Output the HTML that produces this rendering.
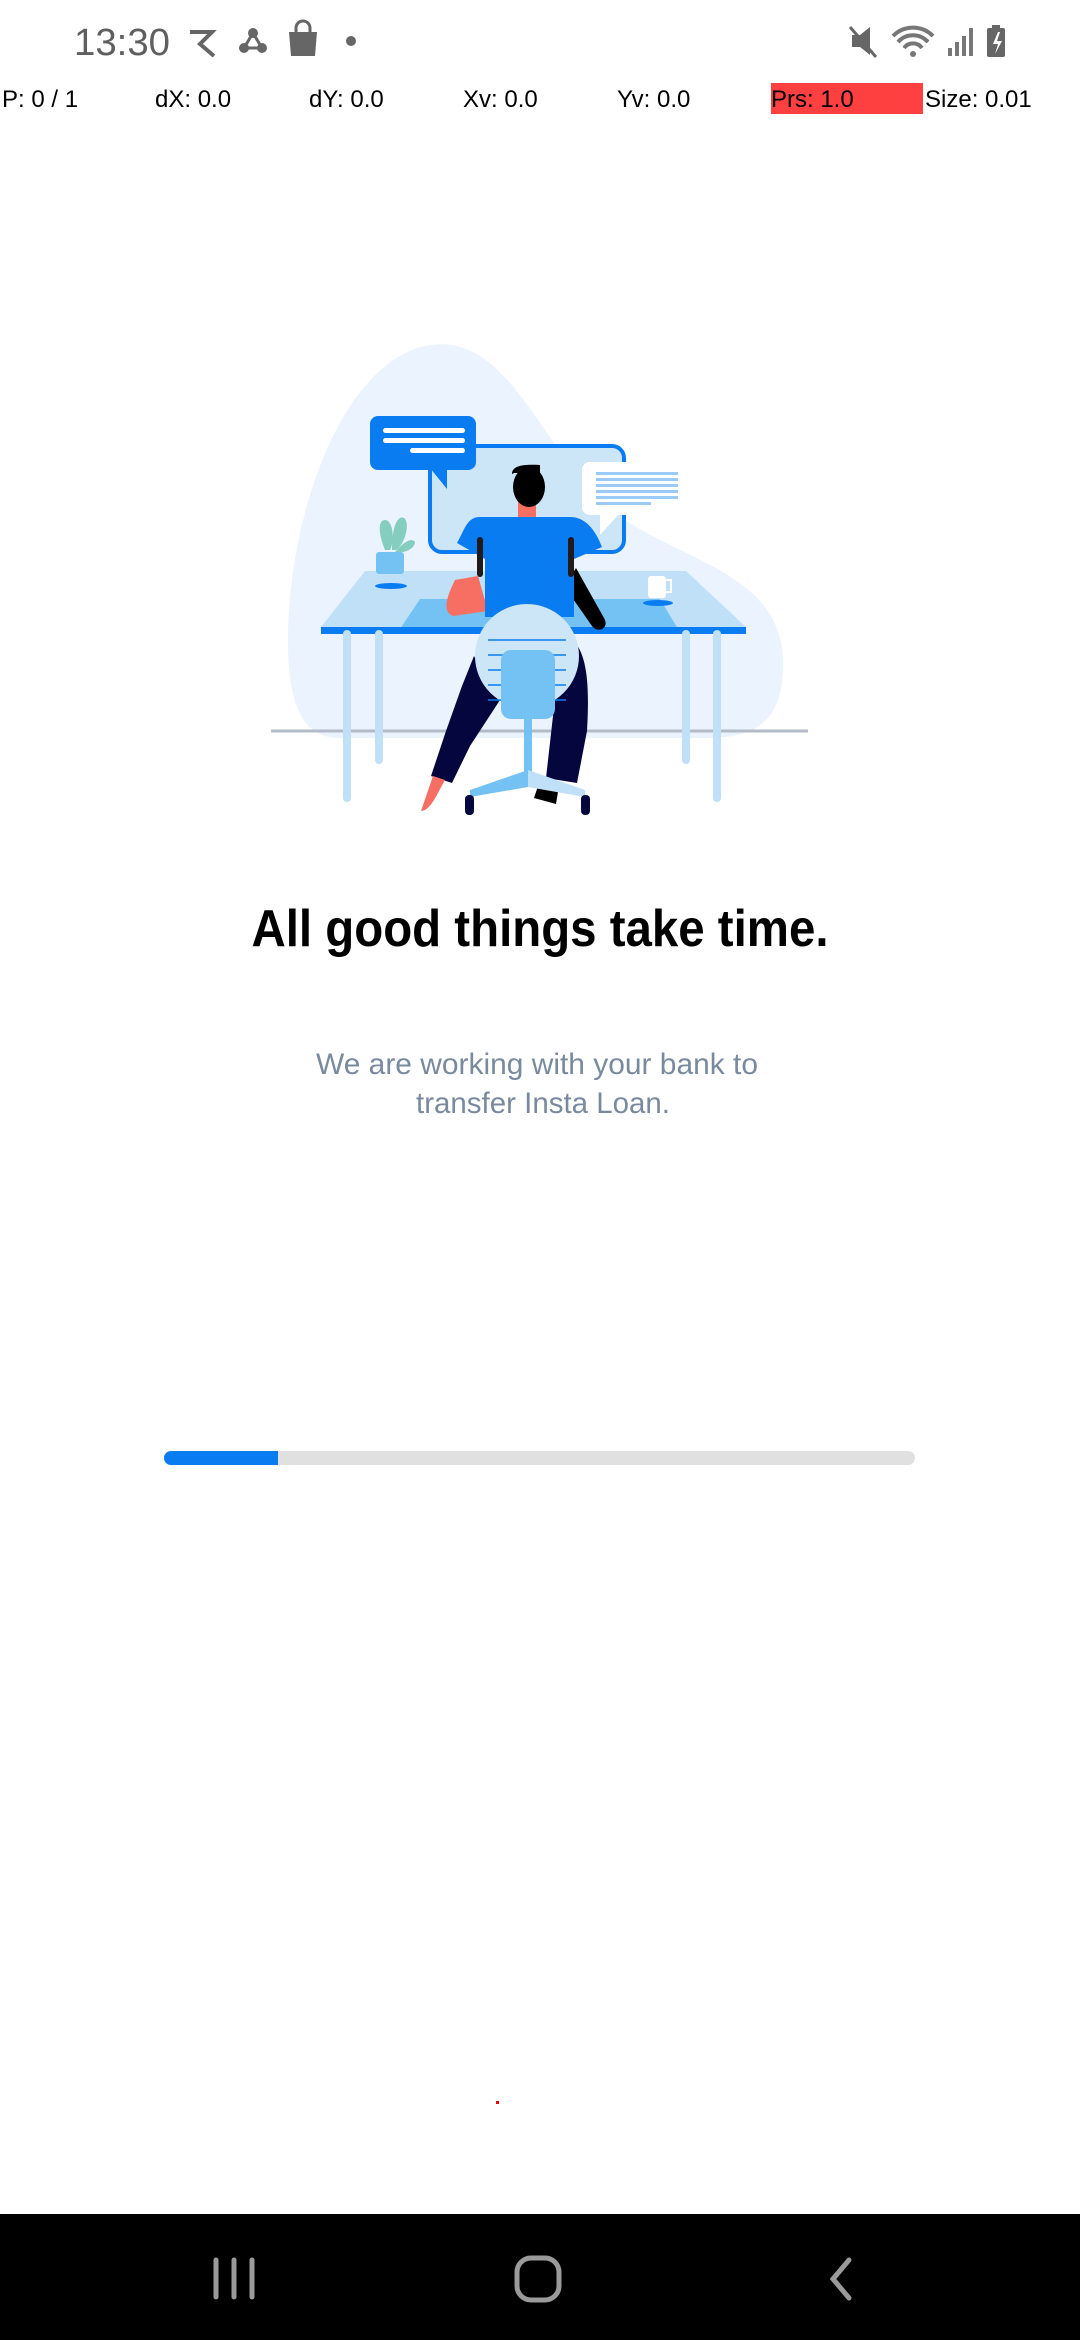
<!DOCTYPE html>
<html><head><meta charset="utf-8"><style>
html,body{margin:0;padding:0;background:#fff;width:1080px;height:2340px;overflow:hidden;font-family:"Liberation Sans",sans-serif}
svg{position:absolute;left:0;top:0}
</style></head><body>
<svg width="1080" height="2340" viewBox="0 0 1080 2340" xmlns="http://www.w3.org/2000/svg">
<!-- status bar -->
<text x="74" y="55" font-size="38" fill="#5f5f5f" font-family="Liberation Sans" textLength="96" lengthAdjust="spacingAndGlyphs">13:30</text>
<path d="M190 32h22l-12 12 14 12" stroke="#666" stroke-width="4" fill="none"/>
<circle cx="253" cy="33" r="5" fill="#666"/><circle cx="244" cy="48" r="5" fill="#666"/><circle cx="262" cy="48" r="5" fill="#666"/><path d="M253 33L244 48h18z" stroke="#666" stroke-width="3" fill="none"/>
<path d="M289 32h28l-2 24h-24z" fill="#666"/><path d="M296 32v-4a7 7 0 0 1 14 0v4" stroke="#666" stroke-width="3" fill="none"/>
<circle cx="351" cy="41" r="5" fill="#666"/>
<path d="M852 35h8l10-8v28l-10-8h-8z" fill="#666"/><path d="M850 27l26 30" stroke="#666" stroke-width="3"/>
<path d="M893 36a28 28 0 0 1 40 0M898 42a20 20 0 0 1 30 0M904 48a11 11 0 0 1 18 0" stroke="#777" stroke-width="4" fill="none"/><circle cx="913" cy="54" r="3" fill="#777"/>
<rect x="948" y="48" width="4" height="8" fill="#777"/><rect x="955" y="42" width="4" height="14" fill="#777"/><rect x="962" y="36" width="4" height="20" fill="#777"/><rect x="969" y="28" width="4" height="28" fill="#777"/>
<rect x="987" y="28" width="18" height="29" rx="2" fill="#666"/><rect x="992" y="25" width="8" height="4" fill="#666"/><path d="M998 32l-5 12h5l-3 10 7-13h-5l3-9z" fill="#fff"/>
<!-- debug row -->
<rect x="771" y="83" width="152" height="31" fill="#ff4040"/>
<g font-size="24" fill="#000" font-family="Liberation Sans">
<text x="2" y="107">P: 0 / 1</text><text x="155" y="107">dX: 0.0</text><text x="309" y="107">dY: 0.0</text><text x="463" y="107">Xv: 0.0</text><text x="617" y="107">Yv: 0.0</text><text x="771" y="107">Prs: 1.0</text><text x="925" y="107">Size: 0.01</text>
</g>
<!-- illustration -->
<path d="M288 640C288 520 340 360 430 345C500 335 530 420 590 490C650 560 780 560 783 660C785 735 740 738 700 738H340C300 738 288 700 288 640Z" fill="#ebf3fe"/>
<line x1="271" y1="731" x2="808" y2="731" stroke="#b3bcc6" stroke-width="3"/>
<rect x="430" y="446" width="194" height="106" rx="12" fill="#cce5f7" stroke="#0a7cf2" stroke-width="4"/>
<rect x="370" y="416" width="106" height="54" rx="8" fill="#0a7cf2"/><path d="M430 468l17 21v-21z" fill="#0a7cf2"/>
<rect x="383" y="428" width="82" height="5" rx="2.5" fill="#fff"/><rect x="383" y="438" width="82" height="5" rx="2.5" fill="#fff"/><rect x="410" y="448" width="55" height="5" rx="2.5" fill="#fff"/>
<rect x="582" y="462" width="97" height="53" rx="8" fill="#fff"/><path d="M600 513v22l20-22z" fill="#fff"/>
<g fill="#9ccaf7"><rect x="596" y="472" width="82" height="3"/><rect x="596" y="478" width="82" height="3"/><rect x="596" y="484" width="82" height="3"/><rect x="596" y="490" width="82" height="3"/><rect x="596" y="496" width="82" height="3"/><rect x="596" y="502" width="55" height="3"/></g>
<path d="M365 571H686L746 627H321Z" fill="#bfe0f7"/>
<path d="M420 599h240l18 30H400z" fill="#74c2f3"/>
<rect x="321" y="627" width="425" height="7" fill="#0a7cf2"/>
<g stroke="#bfe0f7" stroke-width="8" stroke-linecap="round"><line x1="347" y1="634" x2="347" y2="798"/><line x1="379" y1="634" x2="379" y2="760"/><line x1="686" y1="634" x2="686" y2="760"/><line x1="717" y1="634" x2="717" y2="798"/></g>
<!-- plant -->
<path d="M385 550c-8-20-6-30 0-30 8 0 10 20 5 30zM392 550c0-25 6-35 12-32 6 4 2 25-8 32zM395 552c10-12 18-14 20-10 0 6-10 12-20 10z" fill="#85cdbe"/>
<rect x="376" y="552" width="28" height="22" rx="3" fill="#74c2f3"/><ellipse cx="391" cy="586" rx="16" ry="3" fill="#0a7cf2"/>
<!-- cup -->
<rect x="648" y="576" width="18" height="22" rx="3" fill="#fff"/><rect x="665" y="580" width="6" height="12" fill="none" stroke="#fff" stroke-width="2"/><ellipse cx="658" cy="603" rx="15" ry="3" fill="#0a7cf2"/>
<!-- person -->
<path d="M455 580c-10 20-12 32-2 36l35-5-10-35z" fill="#f76f63"/>
<path d="M576 568l28 50c6 10-6 16-12 8l-28-40z" fill="#000"/>
<rect x="518" y="497" width="18" height="22" fill="#f76f63"/>
<ellipse cx="529" cy="487" rx="16" ry="20" fill="#000"/><path d="M512 474c0-8 10-10 28-9v8h-26z" fill="#000"/>
<path d="M480 517h90c15 0 25 12 32 30l-28 12v58H485v-58l-28-16c8-14 10-26 23-26z" fill="#0a7cf2"/>
<rect x="477" y="537" width="6" height="40" rx="3" fill="#221a1a"/><rect x="568" y="537" width="6" height="40" rx="3" fill="#221a1a"/>
<path d="M474 656L500 700L470 746L452 783L431 776L446 731L462 686Z" fill="#06063f"/>
<path d="M574 641C586 655 590 680 587 731L577 783L546 778L553 716L544 656Z" fill="#06063f"/>
<path d="M433 776l-12 35c6 0 12-8 18-20l6-11z" fill="#f76f63"/>
<path d="M538 786l20 6-2 12-22-6z" fill="#000"/>
<circle cx="527" cy="656" r="52" fill="#cce5f7"/>
<g stroke="#0a7cf2" stroke-width="1.5"><line x1="488" y1="640" x2="566" y2="640"/><line x1="488" y1="655" x2="566" y2="655"/><line x1="488" y1="670" x2="566" y2="670"/><line x1="488" y1="685" x2="566" y2="685"/><line x1="488" y1="700" x2="566" y2="700"/></g>
<rect x="501" y="650" width="54" height="69" rx="10" fill="#74c2f3"/>
<rect x="524" y="719" width="8" height="58" fill="#74c2f3"/>
<path d="M528 770L470 790v7l58-10z" fill="#74c2f3"/><path d="M528 770L585 790v7l-57-10z" fill="#bfe0f7"/>
<rect x="465" y="795" width="9" height="20" rx="4" fill="#06063f"/><rect x="581" y="795" width="9" height="20" rx="4" fill="#06063f"/>
<!-- text -->
<text x="540" y="946" text-anchor="middle" font-size="52" font-weight="bold" fill="#000" textLength="577" lengthAdjust="spacingAndGlyphs">All good things take time.</text>
<text x="537" y="1074" text-anchor="middle" font-size="30" fill="#7a8a9e" textLength="442" lengthAdjust="spacingAndGlyphs">We are working with your bank to</text>
<text x="543" y="1113" text-anchor="middle" font-size="30" fill="#7a8a9e" textLength="254" lengthAdjust="spacingAndGlyphs">transfer Insta Loan.</text>
<!-- progress -->
<rect x="164" y="1451" width="751" height="14" rx="7" fill="#e0e0e0"/>
<rect x="164" y="1451" width="114" height="14" rx="7" fill="#0a7cf2"/><rect x="200" y="1451" width="78" height="14" fill="#0a7cf2"/>
<rect x="496" y="2101" width="3" height="3" fill="#e00"/>
<!-- nav bar -->
<rect x="0" y="2214" width="1080" height="126" fill="#000"/>
<g stroke="#9a9a9a" stroke-width="5" stroke-linecap="round" fill="none">
<line x1="216" y1="2260" x2="216" y2="2297"/><line x1="234" y1="2260" x2="234" y2="2297"/><line x1="252" y1="2260" x2="252" y2="2297"/>
<rect x="517" y="2258" width="42" height="42" rx="14"/>
<path d="M849 2260l-16 19 16 19"/>
</g>
</svg>
</body></html>
